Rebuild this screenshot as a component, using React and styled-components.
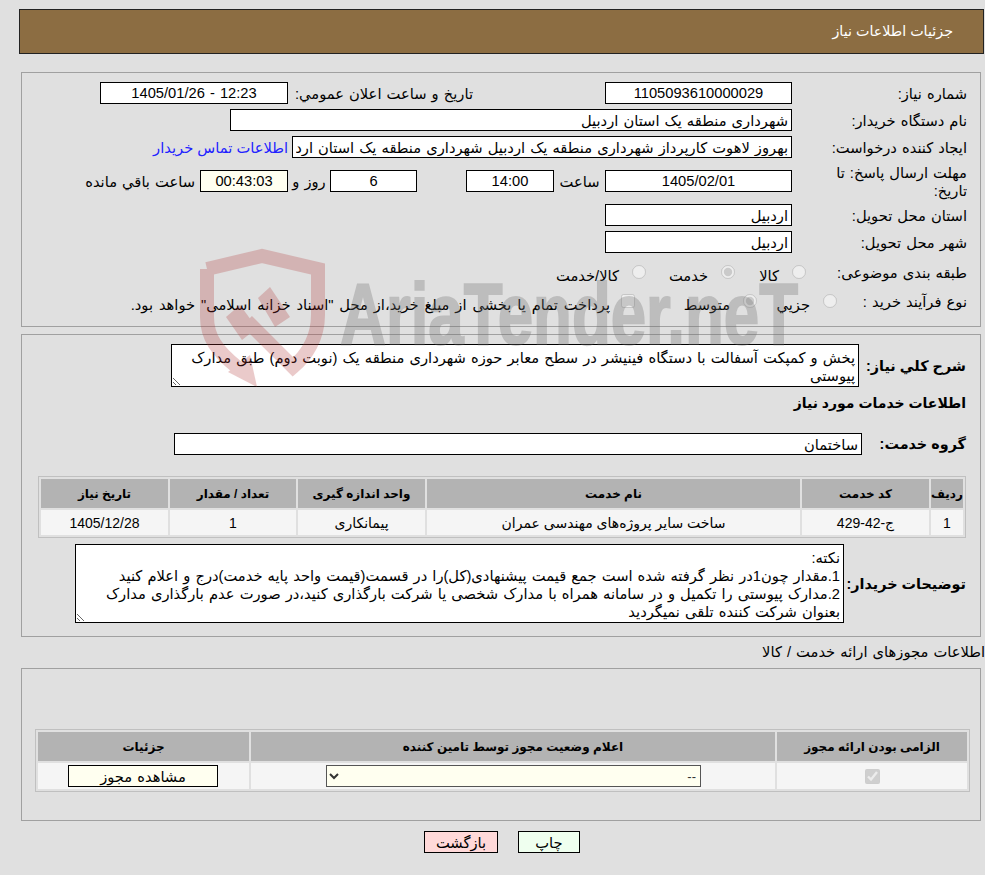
import React from 'react';
import styled, { createGlobalStyle } from 'styled-components';

const SERVICE_COLUMNS = [
    { title: 'ردیف', width: 32 },
    { title: 'کد خدمت', width: 127 },
    { title: 'نام خدمت', width: 373 },
    { title: 'واحد اندازه گیری', width: 127 },
    { title: 'تعداد / مقدار', width: 126 },
    { title: 'تاریخ نیاز', width: 127 },
];

const SERVICE_ROW = ['1', 'ج-42-429', 'ساخت سایر پروژه‌های مهندسی عمران', 'پیمانکاری', '1', '1405/12/28'];

const NOTE_TEXT = `نکته:
1.مقدار چون1در نظر گرفته شده است جمع قیمت پیشنهادی(کل)را در قسمت(قیمت واحد پایه خدمت)درج و اعلام کنید
2.مدارک پیوستی را تکمیل و در سامانه همراه با مدارک شخصی یا شرکت بارگذاری کنید،در صورت عدم بارگذاری مدارک بعنوان شرکت کننده تلقی نمیگردید`;

const Watermark = () => (
    <WatermarkLayer viewBox="0 0 620 150" aria-hidden="true">
        <g opacity=".25">
            <g fill="none" stroke="#b03030" strokeWidth="14">
                <path d="M12 24 L67 11 L123 24 L123 70 C123 92 112 110 98 122 L52 76" />
                <path d="M12 24 L12 72 C12 92 22 106 42 122" />
            </g>
            <g fill="#b03030">
                <path d="M33 127 L55 110 L62 142 Z" />
                <path d="M31 72 L45 60 L62 83 L47 95 Z" />
                <path d="M63 53 L75 42 L95 72 L80 82 Z" />
            </g>
        </g>
        <text x="145" y="99" opacity=".3" fontFamily="Liberation Sans, sans-serif" fontWeight="700" fontSize="88" textLength="458" lengthAdjust="spacingAndGlyphs" fill="#6e6e6e" stroke="#6e6e6e" strokeWidth="2" style={{ paintOrder: 'stroke' }} direction="ltr">AriaTender.neT</text>
    </WatermarkLayer>
);

const App = () => {
    return (
        <Page>
            <GlobalStyle />
            <Header>جزئیات اطلاعات نیاز</Header>

            <InfoPanel>
                <Row>
                    <Label>شماره نیاز:</Label>
                    <Field $width={187} $center readOnly value="1105093610000029" />
                    <InlineLabel $gap={132} $width={185}>تاریخ و ساعت اعلان عمومي:</InlineLabel>
                    <Field $width={188} $center readOnly value="12:23 - 1405/01/26" />
                </Row>
                <Row>
                    <Label>نام دستگاه خریدار:</Label>
                    <Field $width={562} readOnly value="شهرداری منطقه یک استان اردبیل" />
                </Row>
                <Row>
                    <Label>ایجاد کننده درخواست:</Label>
                    <Field $width={500} readOnly value="بهروز لاهوت کارپرداز شهرداری منطقه یک اردبیل شهرداری منطقه یک استان اردبیل" />
                    <ContactLink href="#">اطلاعات تماس خریدار</ContactLink>
                </Row>
                <TallRow>
                    <Label>مهلت ارسال پاسخ: تا تاریخ:</Label>
                    <Field $width={187} $center readOnly value="1405/02/01" />
                    <InlineLabel $width={51} $center>ساعت</InlineLabel>
                    <Field $width={88} $center readOnly value="14:00" />
                    <InlineLabel $gap={49} $width={0} />
                    <Field $width={87} $center readOnly value="6" />
                    <InlineLabel $width={42} $center>روز و</InlineLabel>
                    <Field $width={88} $center $tint readOnly value="00:43:03" />
                    <InlineLabel $gap={5}>ساعت باقي مانده</InlineLabel>
                </TallRow>
                <Row>
                    <Label>استان محل تحویل:</Label>
                    <Field $width={187} readOnly value="اردبیل" />
                </Row>
                <Row>
                    <Label>شهر محل تحویل:</Label>
                    <Field $width={187} readOnly value="اردبیل" />
                </Row>
                <ChoiceRow $height={26} $top={8}>
                    <Label $width={161}>طبقه بندی موضوعی:</Label>
                    <Option $width={71}>
                        <Radio type="radio" name="kind" disabled />
                        <span>کالا</span>
                    </Option>
                    <Option $width={89}>
                        <Radio type="radio" name="kind" disabled checked readOnly />
                        <span>خدمت</span>
                    </Option>
                    <Option>
                        <Radio type="radio" name="kind" disabled />
                        <span>کالا/خدمت</span>
                    </Option>
                </ChoiceRow>
                <ChoiceRow $height={24} $top={6}>
                    <Label $width={130}>نوع فرآیند خرید :</Label>
                    <Option $width={80}>
                        <Radio type="radio" name="process" disabled />
                        <span>جزيي</span>
                    </Option>
                    <Option $width={122}>
                        <Radio type="radio" name="process" disabled checked readOnly />
                        <span>متوسط</span>
                    </Option>
                    <Option $gap={11}>
                        <Tick type="checkbox" disabled />
                        <PaymentNote>پرداخت تمام یا بخشی از مبلغ خرید،از محل "اسناد خزانه اسلامی" خواهد بود.</PaymentNote>
                    </Option>
                </ChoiceRow>
            </InfoPanel>

            <ServicePanel>
                <Row>
                    <BoldLabel $width={107}>شرح کلي نیاز:</BoldLabel>
                    <TextBox $width={688} $height={43} readOnly value="پخش و کمپکت آسفالت با دستگاه فینیشر در سطح معابر حوزه شهرداری منطقه یک (نوبت دوم) طبق مدارک پیوستی" />
                </Row>
                <SubTitle>اطلاعات خدمات مورد نیاز</SubTitle>
                <GroupRow>
                    <BoldLabel $width={104}>گروه خدمت:</BoldLabel>
                    <Field $width={688} readOnly value="ساختمان" />
                </GroupRow>
                <ServiceTable>
                    <thead>
                        <tr>
                            {SERVICE_COLUMNS.map(col => (
                                <HeadCell key={col.title} style={{ width: col.width }}>{col.title}</HeadCell>
                            ))}
                        </tr>
                    </thead>
                    <tbody>
                        <tr>
                            {SERVICE_ROW.map((cell, i) => (
                                <Cell key={i}>{cell}</Cell>
                            ))}
                        </tr>
                    </tbody>
                </ServiceTable>
                <NotesRow>
                    <BoldLabel $width={122}>توضیحات خریدار:</BoldLabel>
                    <TextBox $width={769} $height={79} readOnly value={NOTE_TEXT} />
                </NotesRow>
            </ServicePanel>

            <SectionTitle>اطلاعات مجوزهای ارائه خدمت / کالا</SectionTitle>

            <LicensePanel>
                <LicenseTable>
                    <thead>
                        <tr>
                            <HeadCell style={{ width: 190 }}>الزامی بودن ارائه مجوز</HeadCell>
                            <HeadCell style={{ width: 524 }}>اعلام وضعیت مجوز توسط تامین کننده</HeadCell>
                            <HeadCell style={{ width: 211 }}>جزئیات</HeadCell>
                        </tr>
                    </thead>
                    <tbody>
                        <tr>
                            <LicenseCell>
                                <RequiredTick type="checkbox" disabled checked readOnly />
                            </LicenseCell>
                            <LicenseCell>
                                <StatusSelect defaultValue="--">
                                    <option>--</option>
                                </StatusSelect>
                            </LicenseCell>
                            <LicenseCell>
                                <ViewButton>مشاهده مجوز</ViewButton>
                            </LicenseCell>
                        </tr>
                    </tbody>
                </LicenseTable>
            </LicensePanel>

            <Actions>
                <ActionButton $width={62} $bg="#efffef">چاپ</ActionButton>
                <ActionButton $width={74} $bg="#ffd9d9">بازگشت</ActionButton>
            </Actions>

            <Watermark />
        </Page>
    );
};

const GlobalStyle = createGlobalStyle`
    html, body {
        margin: 0;
        padding: 0;
        background: #e0e0e0;
    }
    * {
        box-sizing: border-box;
    }
`;

const FONT = `"Liberation Sans", "DejaVu Sans", sans-serif`;
const TEXT_SIZE = '14.7px';

const Page = styled.div`
    position: relative;
    width: 985px;
    min-height: 875px;
    padding-top: 9px;
    direction: rtl;
    font-family: ${FONT};
    font-size: ${TEXT_SIZE};
    word-spacing: 1px;
    color: #000;
`;

const WatermarkLayer = styled.svg`
    position: absolute;
    left: 195px;
    top: 245px;
    width: 620px;
    height: 150px;
    pointer-events: none;
`;

const Header = styled.div`
    width: 965px;
    height: 45px;
    margin-right: 1px;
    padding-right: 30px;
    line-height: 43px;
    background: #8c6d42;
    border: 1px solid #222;
    color: #fff;
    font-size: 14.3px;
    word-spacing: normal;
`;

const Panel = styled.div`
    margin-right: 4px;
    width: 960px;
    border: 1px solid #a0a0a0;
`;

const InfoPanel = styled(Panel)`
    margin-top: 18px;
    height: 255px;
    padding: 9px 13px 0 0;
`;

const ServicePanel = styled(Panel)`
    margin-top: 7px;
    height: 303px;
    padding: 9px 14px 0 0;
`;

const LicensePanel = styled(Panel)`
    height: 153px;
    padding: 60px 10px 0 0;
`;

const Row = styled.div`
    display: flex;
    align-items: center;
    min-height: 22px;
    margin-bottom: 5px;
`;

const TallRow = styled(Row)`
    height: 36px;
`;

const GroupRow = styled(Row)`
    margin: 19px 0 0;
`;

const NotesRow = styled(Row)`
    margin: 6px 0 0;
`;

const Label = styled.div`
    flex: none;
    width: ${props => props.$width || 175}px;
    line-height: 18px;
    padding: 2px 0 0 20px;
`;

const ChoiceRow = styled(Row)`
    height: ${props => props.$height}px;
    padding-top: ${props => props.$top}px;

    ${Label} {
        margin-bottom: 7px;
    }
`;

const BoldLabel = styled.div`
    flex: none;
    width: ${props => props.$width}px;
    font-weight: 700;
    font-size: 14.4px;
    word-spacing: normal;
`;

const InlineLabel = styled.div`
    flex: none;
    margin-right: ${props => props.$gap || 0}px;
    width: ${props => (props.$width !== undefined ? `${props.$width}px` : 'auto')};
    text-align: ${props => (props.$center ? 'center' : 'right')};
`;

const Field = styled.input`
    flex: none;
    display: block;
    width: ${props => props.$width}px;
    height: 22px;
    padding: 0 3px;
    border: 1px solid #000;
    border-radius: 0;
    outline: none;
    background: ${props => (props.$tint ? '#fffff0' : '#fff')};
    color: #000;
    direction: rtl;
    font-family: ${FONT};
    font-size: ${TEXT_SIZE};
    word-spacing: 1px;
    text-align: ${props => (props.$center ? 'center' : 'right')};
`;

const TextBox = styled.textarea`
    flex: none;
    display: block;
    width: ${props => props.$width}px;
    height: ${props => props.$height}px;
    padding: 4px 3px 0;
    border: 1px solid #000;
    border-radius: 0;
    outline: none;
    overflow: hidden;
    background: #fff;
    color: #000;
    font-family: ${FONT};
    font-size: ${TEXT_SIZE};
    word-spacing: 1px;
    line-height: 18px;
`;

const ContactLink = styled.a`
    margin-right: 4px;
    color: #2222ff;
    text-decoration: none;
    word-spacing: normal;
`;

const Option = styled.label`
    flex: none;
    display: flex;
    align-items: center;
    gap: ${props => props.$gap || 13}px;
    width: ${props => (props.$width ? `${props.$width}px` : 'auto')};
`;

const PaymentNote = styled.span`
    word-spacing: 1.8px;
`;

const Radio = styled.input`
    flex: none;
    width: 14px;
    height: 14px;
    margin: 0 0 6px;
`;

const Tick = styled.input`
    flex: none;
    width: 14px;
    height: 14px;
    margin: 0 0 6px;
`;

const SubTitle = styled.div`
    height: 22px;
    line-height: 22px;
    font-weight: 700;
    font-size: 14px;
    word-spacing: normal;
`;

const ServiceTable = styled.table`
    width: 928px;
    height: 62px;
    margin-top: 21px;
    table-layout: fixed;
    border: 1px solid #c0c0c0;
    border-spacing: 2px;
`;

const HeadCell = styled.th`
    height: 29px;
    padding: 0;
    background: #b3b3b3;
    font-size: 12px;
    font-weight: 700;
    text-align: center;
    word-spacing: normal;
`;

const Cell = styled.td`
    height: 25px;
    padding: 0;
    background: #f5f5f5;
    font-size: 14px;
    text-align: center;
    word-spacing: normal;
`;

const SectionTitle = styled.div`
    height: 31px;
    line-height: 31px;
`;

const LicenseTable = styled(ServiceTable)`
    width: 935px;
    height: 63px;
    margin-top: 0;
`;

const LicenseCell = styled(Cell)`
    height: 26px;
`;

const RequiredTick = styled.input`
    display: block;
    width: 15px;
    height: 15px;
    margin: 0 auto;
`;

const StatusSelect = styled.select`
    display: block;
    width: 375px;
    height: 22px;
    margin-right: 74px;
    border: 1px solid #555;
    border-radius: 0;
    background-color: #fffff0;
    color: #333;
    font-family: ${FONT};
    font-size: 13px;
`;

const ViewButton = styled.button`
    display: block;
    width: 150px;
    height: 22px;
    margin-right: 31px;
    padding: 0;
    border: 1px solid #000;
    border-radius: 0;
    background: #fffff0;
    color: #000;
    font-family: ${FONT};
    font-size: ${TEXT_SIZE};
    word-spacing: 1px;
`;

const Actions = styled.div`
    display: flex;
    justify-content: center;
    gap: 20px;
    width: 962px;
    margin: 10px 2px 0 0;
`;

const ActionButton = styled.button`
    width: ${props => props.$width}px;
    height: 22px;
    padding: 0;
    border: 1px solid #000;
    border-radius: 0;
    background: ${props => props.$bg};
    color: #000;
    font-family: ${FONT};
    font-size: ${TEXT_SIZE};
`;

export default App;
